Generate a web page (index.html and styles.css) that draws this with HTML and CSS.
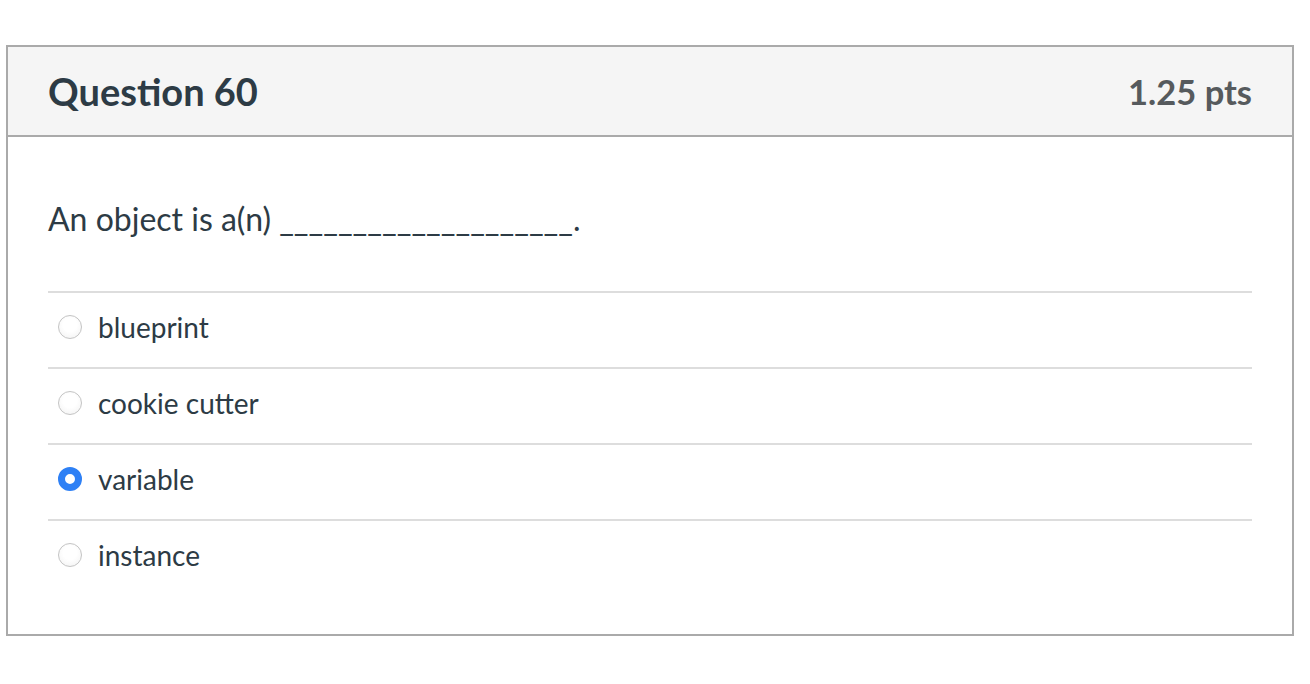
FILE: index.html
```html
<!DOCTYPE html>
<html lang="en">
<head>
<meta charset="utf-8">
<link rel="stylesheet" href="styles.css">
</head>
<body>
<div class="question">
  <div class="q-header">
    <h2 class="q-title">Question 60</h2>
    <div class="q-points">1.25 pts</div>
  </div>
  <div class="q-body">
    <p class="q-text">An object is a(n) ____________________.</p>
    <div class="answers">
      <label class="answer"><span class="radio"></span><span class="label">blueprint</span></label>
      <label class="answer"><span class="radio"></span><span class="label">cookie cutter</span></label>
      <label class="answer"><span class="radio checked"></span><span class="label">variable</span></label>
      <label class="answer"><span class="radio"></span><span class="label">instance</span></label>
    </div>
  </div>
</div>
</body>
</html>
```

FILE: styles.css
```css
html, body {
  margin: 0;
  padding: 0;
  background: #fff;
}
body {
  font-family: Lato, "Liberation Sans", sans-serif;
  color: #2d3b45;
}
.question {
  margin: 45px 16px 0 6px;
  border: 2px solid #aaaaaa;
  box-sizing: border-box;
  height: 591px;
}
.q-header {
  background: #f5f5f5;
  border-bottom: 2px solid #aaaaaa;
  height: 90px;
  box-sizing: border-box;
  display: flex;
  align-items: center;
  justify-content: space-between;
  padding: 0 40px 0 40px;
}
.q-title {
  margin: 0;
  font-size: 38px;
  font-weight: 700;
  color: #2d3b45;
}
.q-points {
  font-size: 34.5px;
  font-weight: 700;
  color: #565a5d;
}
.q-body {
  padding: 0 40px;
}
.q-text {
  margin: 0;
  padding-top: 62px;
  height: 154px;
  box-sizing: border-box;
  font-size: 32px;
  line-height: 40px;
}
.answers {
  display: flex;
  flex-direction: column;
}
.answer {
  display: flex;
  align-items: center;
  height: 76px;
  padding-bottom: 6px;
  border-top: 2px solid #dddddd;
  box-sizing: border-box;
  font-size: 28px;
}
.radio {
  width: 24px;
  height: 24px;
  border-radius: 50%;
  box-sizing: border-box;
  border: 1px solid #c4c4c4;
  background: radial-gradient(circle at 50% 40%, #ffffff 40%, #f0f0f0 100%);
  margin-left: 10px;
  margin-right: 16px;
  flex: none;
}
.radio.checked {
  border: 7px solid #2e80f5;
  background: #fff;
}
.label {
  line-height: 30px;
}
```
